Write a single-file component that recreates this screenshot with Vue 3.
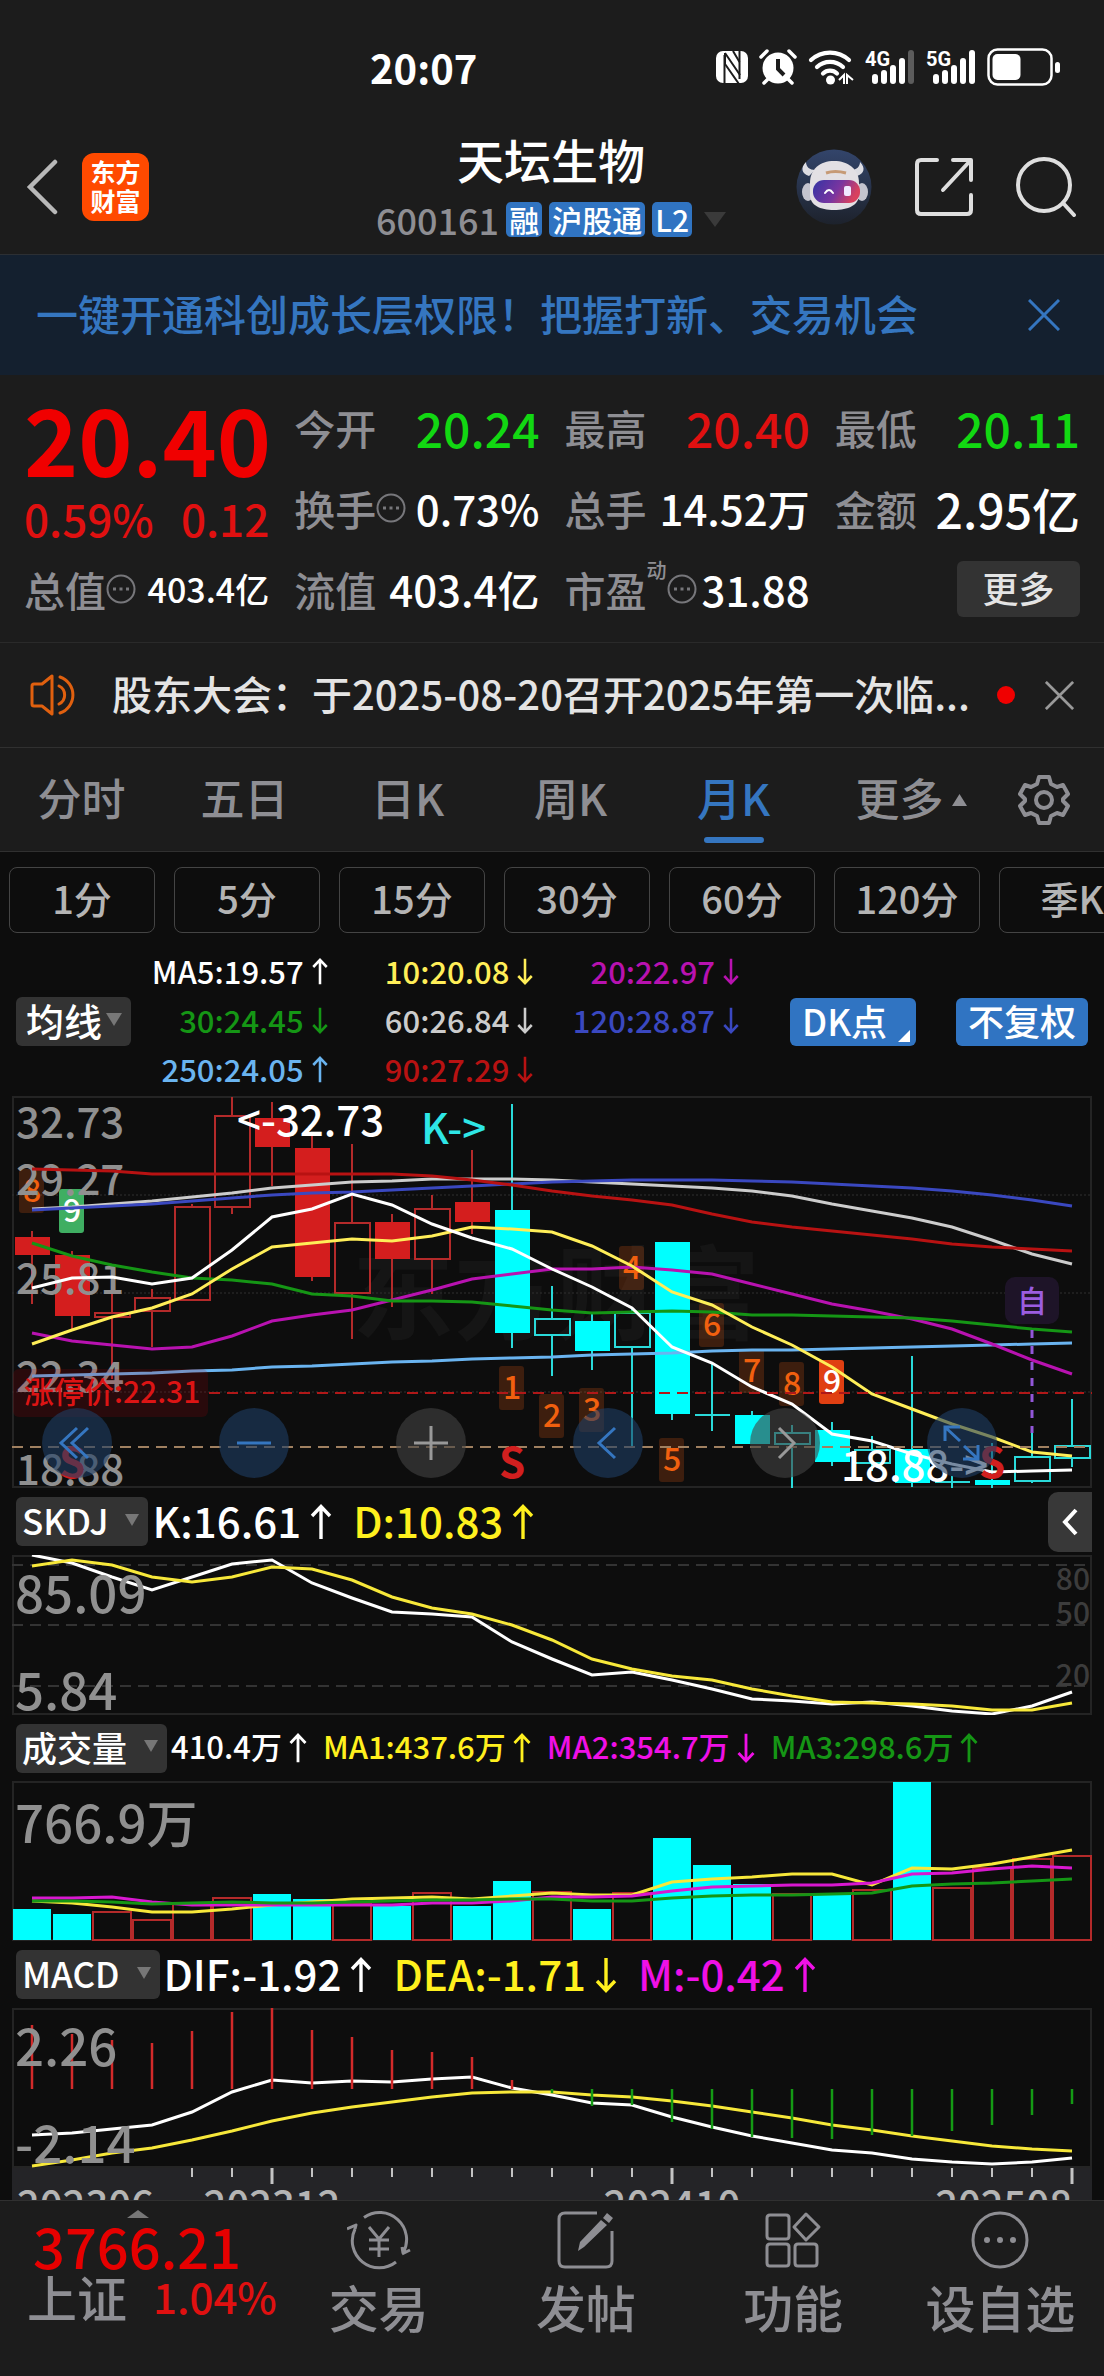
<template>
  <div class="page">
    <!-- Iconos reutilizados -->
    <svg class="symbols" aria-hidden="true">
      <symbol id="arrow" viewBox="0 0 24 36">
        <path d="M12 35V3M3 12l9-9.5 9 9.5" fill="none" stroke="currentColor" stroke-width="3.4" />
      </symbol>
      <symbol id="close" viewBox="0 0 32 32">
        <path d="M1 1l30 30M31 1L1 31" fill="none" stroke="currentColor" stroke-width="3" />
      </symbol>
      <symbol id="more" viewBox="0 0 30 30">
        <circle cx="15" cy="15" r="13.5" fill="none" stroke="currentColor" stroke-width="2" />
        <path d="M7 13.5h3v3H7zM13.500 13.500h3v3h-3zM20 13.500h3v3h-3z" fill="currentColor" />
      </symbol>
    </svg>

    <!-- Barra de estado -->
    <div class="status">
      <span class="clock">20:07</span>
      <div class="status-icons">
        <svg width="32" height="34" viewBox="0 0 32 34">
          <rect x="0" y="1" width="32" height="32" rx="7" fill="#fff" />
          <path d="M8.500 34V5M23.500 0v29" fill="none" stroke="#1c1c1c" stroke-width="2" />
          <path d="M9 3l15 22M9 14l14 20M9 3v11M23.500 12L17 1" fill="none" stroke="#1c1c1c" stroke-width="2" />
        </svg>
        <svg width="38" height="36" viewBox="0 0 38 36">
          <circle cx="19" cy="19" r="15.500" fill="#fff" />
          <path d="M2 8l6-6M36 8l-6-6M9 30l-4 4M29 30l4 4" stroke="#fff" stroke-width="3.500" stroke-linecap="round" />
          <path d="M19 10v10l6 6" fill="none" stroke="#1c1c1c" stroke-width="4" />
        </svg>
        <svg width="46" height="36" viewBox="0 0 46 36">
          <g fill="none" stroke="#fff" stroke-width="4.200" stroke-linecap="round">
            <path d="M3 11a28 28 0 0 1 38 0" />
            <path d="M9 18a19 19 0 0 1 26 0" />
            <path d="M15 24.500a10 10 0 0 1 14 0" />
          </g>
          <circle cx="22.500" cy="31" r="4.500" fill="#fff" />
          <path d="M31 31l5-5v9M39 35v-9l6 5" fill="none" stroke="#fff" stroke-width="2" />
        </svg>
        <svg v-for="net in networks" :key="net.name" width="50" height="36" viewBox="0 0 50 36">
          <text x="0" y="17" class="net-name">{{ net.name }}</text>
          <rect
            v-for="(h, i) in [10, 14, 19, 26, 34]"
            :key="h"
            :x="7 + i * 9"
            :y="35 - h"
            width="6"
            :height="h"
            rx="3"
            :fill="i < net.level ? '#fff' : '#5c5c5c'"
          />
        </svg>
        <svg width="73" height="38" viewBox="0 0 73 38">
          <rect x="1.500" y="1.500" width="63" height="35" rx="9" fill="none" stroke="#fff" stroke-width="2.500" />
          <rect x="5.500" y="6" width="28" height="26" rx="5" fill="#fff" />
          <rect x="68" y="14" width="5" height="11" rx="2.500" fill="#fff" />
        </svg>
      </div>
    </div>

    <header class="header">
      <div class="side">
        <button class="plain" aria-label="返回">
          <svg width="32" height="56" viewBox="0 0 32 56">
            <path d="M29 3L4 28l25 25" fill="none" stroke="#b8b8b8" stroke-width="4.500" stroke-linecap="round" />
          </svg>
        </button>
        <a href="#" class="brand">东方<br>财富</a>
      </div>
      <div class="title">
        <h1>天坛生物</h1>
        <div class="code">
          <span class="code-num">600161</span>
          <span class="tag">融</span>
          <span class="tag">沪股通</span>
          <span class="tag">L2</span>
          <svg width="22" height="15" viewBox="0 0 22 15"><path d="M0 0h22L11 15z" fill="#3a3a3a" /></svg>
        </div>
      </div>
      <div class="side side-right">
        <button class="plain" aria-label="助手">
          <svg width="76" height="76" viewBox="0 0 76 76">
            <defs>
              <linearGradient id="sky" x1="0" y1="0" x2="0" y2="1">
                <stop offset="0" stop-color="#33456b" />
                <stop offset="1" stop-color="#1d222c" />
              </linearGradient>
              <linearGradient id="visor" x1="0" y1="0" x2="1" y2="0.300">
                <stop offset="0" stop-color="#3434a4" />
                <stop offset="0.600" stop-color="#7a35a0" />
                <stop offset="1" stop-color="#d8415e" />
              </linearGradient>
            </defs>
            <circle cx="38" cy="38" r="37.500" fill="url(#sky)" />
            <path d="M10 13c-6 6-4 12 3 14l6-6c-5 0-9-3-9-8zM64 13c6 6 4 12-3 14l-6-6c5 0 9-3 9-8z" fill="#dcdce2" />
            <ellipse cx="12" cy="43" rx="6" ry="9" fill="#c4c4ce" />
            <ellipse cx="66" cy="43" rx="6" ry="9" fill="#c4c4ce" />
            <path d="M14 34c0-14 10-22 24-22s25 8 25 22v12c0 10-11 15-25 15s-24-5-24-15z" fill="#e3e0e4" />
            <path d="M30 24q9-3 20 0" fill="none" stroke="#c69a76" stroke-width="3" />
            <rect x="17" y="31" width="47" height="23" rx="11" fill="url(#visor)" />
            <path d="M29 44q4-6 8 0" fill="none" stroke="#fff" stroke-width="2" stroke-linecap="round" />
            <rect x="48" y="37" width="7" height="10" rx="2" fill="#f0e8ff" />
          </svg>
        </button>
        <button class="plain" aria-label="分享">
          <svg width="58" height="60" viewBox="0 0 58 60" fill="none" stroke="#dedede" stroke-width="4" stroke-linecap="round" stroke-linejoin="round">
            <path d="M22 3H6q-4 0-4 4v46q0 4 4 4h46q4 0 4-4V38" />
            <path d="M38 3h18v20M55 4L28 33" />
          </svg>
        </button>
        <button class="plain" aria-label="搜索">
          <svg width="60" height="60" viewBox="0 0 60 60" fill="none" stroke="#dedede" stroke-width="4" stroke-linecap="round">
            <circle cx="28" cy="28" r="26" />
            <path d="M47 46l11 12" />
          </svg>
        </button>
      </div>
    </header>

    <div class="banner">
      <a href="#">一键开通科创成长层权限！把握打新、交易机会</a>
      <button class="plain" aria-label="关闭"><svg width="32" height="32"><use href="#close" /></svg></button>
    </div>

    <!-- Cotización -->
    <section class="quote">
      <div class="price">
        <strong>20.40</strong>
        <div class="change"><span>0.59%</span><span>0.12</span></div>
      </div>
      <div v-for="q in quotes" :key="q.label" class="cell">
        <span class="label">{{ q.label }}<sup v-if="q.sup">{{ q.sup }}</sup></span>
        <svg v-if="q.more" class="info" width="30" height="30"><use href="#more" /></svg>
        <span class="value" :class="[q.color, q.size]">{{ q.value }}</span>
      </div>
      <div class="cell cell-end"><button class="btn-more">更多</button></div>
    </section>

    <div class="notice">
      <svg width="50" height="42" viewBox="0 0 50 42" fill="none" stroke="#e0600f" stroke-width="3" stroke-linejoin="round">
        <path d="M2 12q0-2 2-2h8L22 2v38L12 32H4q-2 0-2-2z" />
        <path d="M29 12a10 10 0 0 1 0 18M30 3a19 19 0 0 1 0 36" stroke-linecap="round" />
      </svg>
      <a href="#">股东大会：于2025-08-20召开2025年第一次临...</a>
      <i class="dot" />
      <button class="plain" aria-label="关闭"><svg width="29" height="29"><use href="#close" /></svg></button>
    </div>

    <nav class="tabs">
      <button v-for="t in tabs" :key="t" class="tab" :class="{ active: t === activeTab, wide: t === '更多' }" @click="activeTab = t">
        {{ t }}<svg v-if="t === '更多'" width="15" height="12" viewBox="0 0 15 12"><path d="M7.500 0L15 12H0z" fill="currentColor" /></svg>
      </button>
      <button class="gear" aria-label="设置">
        <svg width="52" height="52" viewBox="0 0 52 52" fill="none" stroke="currentColor" stroke-width="4" stroke-linejoin="round">
          <path d="M21 3h10l2 7 6 3 6-2 5 9-5 5v2l5 5-5 9-6-2-6 3-2 7H21l-2-7-6-3-6 2-5-9 5-5v-2l-5-5 5-9 6 2 6-3z" />
          <circle cx="26" cy="26" r="8" />
        </svg>
      </button>
    </nav>

    <div class="chips">
      <button v-for="p in periods" :key="p">{{ p }}</button>
    </div>

    <div class="averages">
      <button class="select">均线<svg width="16" height="13" viewBox="0 0 16 13"><path d="M0 0h16L8 13z" fill="#777" /></svg></button>
      <div class="ma-grid">
        <span v-for="m in averages" :key="m.text" :style="{ color: m.color }">
          {{ m.text }}<svg class="arrow-s" :class="{ down: m.down }"><use href="#arrow" /></svg>
        </span>
      </div>
      <button class="blue dk">DK点<svg width="12" height="12" viewBox="0 0 12 12"><path d="M12 0v12H0z" fill="#fff" /></svg></button>
      <button class="blue">不复权</button>
    </div>

    <!-- Velas mensuales -->
    <div class="panel">
      <svg class="chart" viewBox="0 0 1080 392">
        <text class="watermark" x="340" y="236">东方财富</text>
        <rect class="frame" x="1" y="1" width="1078" height="390" />
        <path class="dotted" d="M0 99H1080M0 197H1080M0 296H1080" />
        <g v-for="(c, i) in candles" :key="i" :class="i < 12 ? 'up' : 'dn'">
          <path class="wick" :d="`M${cx(i)} ${c[3]}V${c[1]}M${cx(i)} ${c[2]}V${c[4]}`" />
          <rect v-if="c[0]" class="solid" :x="cx(i) - 17" :y="c[1]" width="35" :height="c[2] - c[1]" />
          <path v-else-if="c[1] === c[2]" class="wick" :d="`M${cx(i) - 17} ${c[1]}h35`" />
          <rect v-else class="hollow" :x="cx(i) - 17" :y="c[1]" width="35" :height="c[2] - c[1]" />
        </g>
        <g v-for="b in badges" :key="b.i">
          <rect :x="cx(b.i) - 13" :y="b.y" width="25" height="44" rx="3" :fill="b.bg || 'rgba(200,80,20,0.26)'" />
          <text class="badge" :x="cx(b.i)" :y="b.y + 33" :fill="b.bg ? '#fff' : '#f1600f'">{{ b.n }}</text>
        </g>
        <text v-for="t in priceAxis" :key="t.v" class="axis" x="4" :y="t.y">{{ t.v }}</text>
        <polyline v-for="l in maLines" :key="l.color" class="line" :points="pts(l.data)" :stroke="l.color" />
        <path d="M0 351H1080" stroke="#a08060" stroke-width="2" stroke-dasharray="11 7" />
        <path d="M197 297H1080" stroke="#b01818" stroke-width="2" stroke-dasharray="11 7" />
        <rect x="1" y="273" width="195" height="48" rx="6" fill="rgba(170,0,10,0.18)" />
        <text x="12" y="307" class="limit">涨停价:22.31</text>
        <rect x="993" y="181" width="54" height="47" rx="10" fill="#1e1428" />
        <text x="1020" y="216" class="self">自</text>
        <path d="M1020 234V337" stroke="#9257d8" stroke-width="3" stroke-dasharray="8 8" />
        <text x="225" y="40" class="mark">&lt;-32.73</text>
        <text x="409" y="48" class="mark cyan">K-&gt;</text>
        <text x="829" y="385" class="mark">18.88-&gt;</text>
        <text v-for="i in [1, 12, 24]" :key="i" :x="cx(i)" y="382" class="sell">S</text>
      </svg>
      <div class="tools">
        <button v-for="t in tools" :key="t.name" :class="{ off: t.off }" :aria-label="t.name">
          <svg width="70" height="70" viewBox="0 0 70 70"><path :d="t.d" fill="none" stroke="currentColor" stroke-width="3" /></svg>
        </button>
      </div>
    </div>

    <template v-for="ind in indicators" :key="ind.name">
      <div class="ind-head" :class="{ compact: ind.name === '成交量' }">
        <button class="select ind">{{ ind.name }}<svg width="14" height="12" viewBox="0 0 14 12"><path d="M0 0h14L7 12z" fill="#777" /></svg></button>
        <span v-for="v in ind.values" :key="v.text" :style="{ color: v.color }">
          {{ v.text }}<svg class="arrow" :class="{ down: v.down }"><use href="#arrow" /></svg>
        </span>
        <button v-if="ind.name === 'SKDJ'" class="collapse" aria-label="展开">
          <svg width="18" height="28" viewBox="0 0 18 28"><path d="M15 2L4 14l11 12" fill="none" stroke="#fff" stroke-width="4" /></svg>
        </button>
      </div>
      <div class="panel">
        <svg class="chart" viewBox="0 0 1080 160">
          <rect class="frame" x="1" y="1" width="1078" height="158" />
          <template v-if="ind.name === 'SKDJ'">
            <path class="dashed" d="M0 10H1080M0 70H1080M0 131H1080" />
            <text v-for="g in skdjGrid" :key="g.v" class="grid-num" x="1078" :y="g.y">{{ g.v }}</text>
          </template>
          <template v-if="ind.name === '成交量'">
            <rect
              v-for="(v, i) in volumes"
              :key="i"
              :class="v[0] ? 'vol-dn' : 'vol-up'"
              :x="i * 40 + 1"
              :y="v[1] + 1"
              width="38"
              :height="158 - v[1]"
            />
          </template>
          <polyline v-for="l in ind.lines" :key="l.color" class="line" :points="pts(l.data)" :stroke="l.color" />
          <template v-if="ind.name === 'MACD'">
            <path
              v-for="(y, i) in macdBars"
              :key="i"
              :d="`M${cx(i)} 81V${y}`"
              :stroke="y < 81 ? '#d22a2a' : '#149a14'"
              stroke-width="2.500"
            />
          </template>
          <text v-for="t in ind.axis" :key="t.v" class="axis big" x="3" :y="t.y">{{ t.v }}</text>
        </svg>
      </div>
    </template>

    <div class="timeline">
      <svg class="chart" viewBox="0 0 1080 32">
        <path v-for="i in 23" :key="i" :d="`M${cx(i + 3)} 0V${(i + 3) % 10 === 6 ? 16 : 9}`" stroke="#c4c4c4" :stroke-width="(i + 3) % 10 === 6 ? 3 : 2" />
        <text class="date" x="5" y="52">202306</text>
        <text class="date" x="260" y="52" text-anchor="middle">202312</text>
        <text class="date" x="660" y="52" text-anchor="middle">202410</text>
        <text class="date" x="1060" y="52" text-anchor="end">202508</text>
      </svg>
    </div>

    <footer class="footer">
      <a href="#" class="index">
        <svg width="22" height="8" viewBox="0 0 22 8"><path d="M11 0l11 8H0z" fill="#777" /></svg>
        <strong>3766.21</strong>
        <span class="index-row"><span class="index-name">上证</span><span class="index-pct">1.04%</span></span>
      </a>
      <button v-for="a in actions" :key="a.name" class="action">
        <svg width="64" height="60" viewBox="0 0 64 60" fill="none" stroke="currentColor" stroke-width="3" stroke-linejoin="round">
          <path :d="a.d" />
          <path v-if="a.fill" :d="a.fill" fill="currentColor" stroke="none" />
        </svg>
        {{ a.name }}
      </button>
    </footer>
  </div>
</template>

<script setup>
import { ref } from 'vue'

const activeTab = ref('月K')
const tabs = ['分时', '五日', '日K', '周K', '月K', '更多']
const periods = ['1分', '5分', '15分', '30分', '60分', '120分', '季K']

const networks = [
  { name: '4G', level: 4 },
  { name: '5G', level: 5 }
]

const quotes = [
  { label: '今开', value: '20.24', color: 'green', size: 'lg' },
  { label: '最高', value: '20.40', color: 'red', size: 'lg' },
  { label: '最低', value: '20.11', color: 'green', size: 'lg' },
  { label: '换手', value: '0.73%', more: true },
  { label: '总手', value: '14.52万' },
  { label: '金额', value: '2.95亿', size: 'lg' },
  { label: '总值', value: '403.4亿', more: true, size: 'sm' },
  { label: '流值', value: '403.4亿' },
  { label: '市盈', value: '31.88', more: true, sup: '动' }
]

const averages = [
  { text: 'MA5:19.57', color: '#fff' },
  { text: '10:20.08', color: '#ffee58', down: true },
  { text: '20:22.97', color: '#b812b0', down: true },
  { text: '30:24.45', color: '#159615', down: true },
  { text: '60:26.84', color: '#ccc', down: true },
  { text: '120:28.87', color: '#3a48c0', down: true },
  { text: '250:24.05', color: '#6ab4f0' },
  { text: '90:27.29', color: '#b81212', down: true }
]

// Centro horizontal de cada mes
const cx = i => 20 + i * 40
const pts = data => data.map((y, i) => `${cx(i)},${y}`).join(' ')

// [relleno, techo, base, máximo, mínimo]
const candles = [
  [1, 141, 159, 135, 208], [1, 159, 220, 155, 233], [0, 217, 221, 190, 283],
  [0, 202, 215, 193, 251], [0, 111, 204, 108, 204], [0, 20, 111, 1, 118],
  [1, 22, 51, 6, 90], [1, 52, 181, 40, 185], [0, 127, 197, 48, 243],
  [1, 126, 163, 118, 211], [0, 113, 163, 99, 198], [1, 106, 126, 54, 138],
  [1, 114, 237, 8, 252], [0, 223, 239, 190, 280], [1, 225, 255, 218, 274],
  [0, 217, 251, 211, 351], [1, 146, 318, 146, 324], [0, 319, 319, 268, 335],
  [1, 319, 348, 315, 348], [0, 337, 348, 329, 392], [1, 334, 366, 326, 370],
  [0, 354, 367, 340, 375], [1, 353, 387, 260, 391], [0, 386, 386, 380, 392],
  [1, 384, 389, 347, 392], [0, 361, 385, 336, 387], [0, 350, 362, 303, 371]
]

const maLines = [
  { color: '#6ab4f0', data: [280, 279, 278, 277, 275, 274, 271, 270, 268, 266, 265, 263, 262, 261, 259, 258, 257, 255, 254, 254, 253, 252, 251, 250, 249, 248, 247] },
  { color: '#ccc', data: [113, 111, 108, 105, 101, 97, 92, 89, 86, 85, 83, 83, 83, 84, 86, 88, 90, 92, 95, 100, 108, 115, 122, 131, 144, 158, 168] },
  { color: '#3a48c0', data: [114, 112, 110, 108, 105, 102, 99, 97, 96, 94, 92, 90, 88, 86, 85, 84, 84, 84, 85, 86, 88, 90, 92, 95, 99, 104, 110] },
  { color: '#b81212', data: [73, 74, 75, 78, 78, 78, 78, 78, 78, 78, 80, 84, 89, 95, 100, 104, 109, 118, 126, 131, 135, 139, 143, 148, 151, 153, 155] },
  { color: '#b812b0', data: [237, 245, 249, 253, 251, 240, 225, 219, 214, 204, 194, 183, 178, 173, 173, 171, 174, 178, 188, 198, 208, 215, 223, 233, 248, 264, 278] },
  { color: '#159615', data: [147, 160, 169, 176, 182, 184, 188, 198, 200, 205, 205, 206, 210, 214, 217, 216, 215, 216, 219, 219, 220, 221, 222, 225, 229, 233, 236] },
  { color: '#ffee58', data: [248, 234, 221, 212, 198, 173, 151, 147, 143, 145, 140, 131, 133, 136, 150, 170, 196, 209, 231, 249, 271, 298, 313, 328, 341, 356, 360] },
  { color: '#fff', data: [192, 182, 181, 188, 182, 154, 121, 113, 98, 109, 128, 142, 153, 173, 191, 212, 251, 267, 291, 308, 338, 345, 358, 368, 376, 375, 374] }
]

const priceAxis = [
  { v: '32.73', y: 42 },
  { v: '29.27', y: 99 },
  { v: '25.81', y: 198 },
  { v: '22.34', y: 296 },
  { v: '18.88', y: 389 }
]

const badges = [
  { i: 0, n: 8, y: 73 },
  { i: 1, n: 9, y: 93, bg: '#3fae62' },
  { i: 12, n: 1, y: 270 },
  { i: 13, n: 2, y: 298 },
  { i: 14, n: 3, y: 292 },
  { i: 15, n: 4, y: 150 },
  { i: 16, n: 5, y: 342 },
  { i: 17, n: 6, y: 207 },
  { i: 18, n: 7, y: 253 },
  { i: 19, n: 8, y: 266 },
  { i: 20, n: 9, y: 264, bg: '#e03f12' }
]

const tools = [
  { name: '最早', d: 'M35 20L19 35l16 15M46 20L30 35l16 15' },
  { name: '缩小', d: 'M18 35h34' },
  { name: '放大', d: 'M18 35h34M35 18v34', off: true },
  { name: '左移', d: 'M42 20L26 35l16 15' },
  { name: '右移', d: 'M29 20l15 15-15 15', off: true },
  { name: '全屏', d: 'M18 33V19h15M19 20l14 13M51 37v14H36M50 50L37 38' }
]

const skdjGrid = [
  { v: 80, y: 35 },
  { v: 50, y: 69 },
  { v: 20, y: 131 }
]

const indicators = [
  {
    name: 'SKDJ',
    values: [{ text: 'K:16.61', color: '#fff' }, { text: 'D:10.83', color: '#fff01e' }],
    axis: [{ v: '85.09', y: 58 }, { v: '5.84', y: 155 }],
    lines: [
      { color: '#fff', data: [0, 8, 22, 35, 22, 9, 5, 28, 43, 57, 59, 62, 87, 104, 120, 117, 125, 134, 144, 146, 149, 147, 151, 156, 159, 151, 137] },
      { color: '#f7e83a', data: [11, 5, 10, 22, 27, 22, 12, 14, 25, 42, 53, 59, 70, 85, 104, 114, 121, 125, 134, 141, 147, 148, 149, 151, 155, 155, 148] }
    ]
  },
  {
    name: '成交量',
    values: [
      { text: '410.4万', color: '#fff' },
      { text: 'MA1:437.6万', color: '#fff01e' },
      { text: 'MA2:354.7万', color: '#ef10e6', down: true },
      { text: 'MA3:298.6万', color: '#159615' }
    ],
    axis: [{ v: '766.9万', y: 62 }],
    lines: [
      { color: '#f7e83a', data: [120, 122, 126, 131, 131, 128, 124, 121, 118, 117, 116, 118, 115, 112, 114, 114, 101, 98, 96, 93, 93, 104, 87, 88, 83, 76, 69] },
      { color: '#d818d0', data: [117, 117, 116, 121, 124, 124, 124, 124, 124, 124, 122, 122, 120, 116, 116, 115, 110, 106, 105, 104, 104, 102, 93, 92, 88, 85, 87] },
      { color: '#159615', data: [120, 120, 121, 123, 122, 121, 122, 122, 121, 120, 119, 119, 118, 118, 120, 120, 117, 115, 114, 114, 113, 112, 105, 103, 102, 100, 98] }
    ]
  },
  {
    name: 'MACD',
    values: [
      { text: 'DIF:-1.92', color: '#fff' },
      { text: 'DEA:-1.71', color: '#fff01e', down: true },
      { text: 'M:-0.42', color: '#ef10e6' }
    ],
    axis: [{ v: '2.26', y: 58 }, { v: '-2.14', y: 155 }],
    lines: [
      { color: '#fff', data: [127, 125, 121, 117, 104, 84, 72, 75, 73, 74, 71, 69, 80, 87, 95, 97, 109, 119, 128, 135, 142, 145, 151, 154, 156, 154, 150] },
      { color: '#f7e83a', data: [158, 152, 145, 140, 132, 123, 113, 105, 99, 94, 89, 85, 84, 84, 87, 89, 93, 98, 104, 110, 117, 122, 128, 133, 138, 141, 143] }
    ]
  }
]

// [bajista, techo]
const volumes = [
  [1, 127], [1, 132], [0, 130], [0, 138], [0, 122], [0, 116], [1, 112], [1, 117], [0, 122],
  [1, 124], [0, 111], [1, 124], [1, 99], [0, 110], [1, 127], [0, 111], [1, 56], [1, 83],
  [1, 102], [0, 112], [1, 113], [0, 108], [1, 0], [0, 106], [0, 86], [0, 77], [0, 74]
]

const macdBars = [17, 26, 32, 35, 23, 4, 0, 22, 29, 42, 44, 49, 72, 85, 98, 97, 114, 121, 129, 130, 131, 127, 128, 123, 117, 107, 96]

const actions = [
  {
    name: '交易',
    d: 'M17 7.500A27 27 0 0 1 56 43l-1-6M55 44l8-4M49 52A27 27 0 0 1 8 19M8 19L9 15 0 19M22 17l10 12 10-12M22 30h20M22 39h20M32 29v18'
  },
  {
    name: '发帖',
    d: 'M43 3H11q-6 0-6 6v42q0 6 6 6h41q6 0 6-6V21',
    fill: 'M24 41l2-9L47 10l6 5L30 37zM49 8l4-5 6 5-4 5z'
  },
  {
    name: '功能',
    d: 'M9 5h16q3 0 3 3v18q0 3-3 3H9q-3 0-3-3V8q0-3 3-3zM9 34h16q3 0 3 3v16q0 3-3 3H9q-3 0-3-3V37q0-3 3-3zM37 34h16q3 0 3 3v16q0 3-3 3H37q-3 0-3-3V37q0-3 3-3zM45 4l13 13-13 13-12-13z'
  },
  {
    name: '设自选',
    d: 'M32 3a27 27 0 1 1 0 54a27 27 0 1 1 0-54z',
    fill: 'M16 30a3 3 0 1 1 6 0a3 3 0 1 1-6 0zM29 30a3 3 0 1 1 6 0a3 3 0 1 1-6 0zM42 30a3 3 0 1 1 6 0a3 3 0 1 1-6 0z'
  }
]
</script>

<style>
body {
  margin: 0;
  background: #0d0d0d;
}
</style>

<style scoped>
.page {
  background: #0d0d0d;
  color: #fff;
  font-family: "Noto Sans CJK SC", "Noto Sans", sans-serif;
  font-weight: 500;
  overflow: hidden;
}

button {
  font-family: inherit;
  font-weight: inherit;
  border: 0;
  padding: 0;
  cursor: pointer;
}

a {
  text-decoration: none;
  color: inherit;
}

svg {
  display: block;
  flex: none;
}

.symbols {
  position: absolute;
  width: 0;
  height: 0;
}

.plain {
  background: none;
}

/* Barra de estado y cabecera */
.status {
  height: 114px;
  padding: 10px 44px 0 370px;
  display: flex;
  align-items: center;
  justify-content: space-between;
  background: #1c1c1c;
}

.clock {
  font-size: 40px;
  line-height: 42px;
  font-weight: 700;
}

.status-icons {
  display: flex;
  align-items: center;
  gap: 11px;
}

.net-name {
  font: 700 20px Roboto, sans-serif;
  fill: #fff;
}

.header {
  display: grid;
  grid-template-columns: 1fr auto 1fr;
  align-items: center;
  height: 120px;
  padding: 0 28px 10px 26px;
  background: #1c1c1c;
  border-bottom: 1px solid #2c2f33;
}

.side {
  display: flex;
  align-items: center;
  gap: 24px;
  margin-top: 6px;
}

.side-right {
  justify-content: flex-end;
  gap: 43px;
}

.brand {
  width: 67px;
  height: 68px;
  border-radius: 12px;
  background: #ff4a00;
  font-size: 25px;
  line-height: 29px;
  font-weight: 700;
  text-align: center;
  padding-top: 4px;
  box-sizing: border-box;
}

h1 {
  margin: 0;
  font-size: 47px;
  line-height: 70px;
  font-weight: 500;
  text-align: center;
}

.code {
  display: flex;
  align-items: center;
  gap: 7px;
  height: 50px;
}

.code-num {
  font-size: 36px;
  line-height: 50px;
  color: #8e8e93;
}

.tag {
  font-size: 30px;
  line-height: 35px;
  padding: 0 3px;
  border-radius: 5px;
  background: #3074c2;
}

.code svg {
  margin-left: 5px;
}

.banner {
  height: 120px;
  padding: 0 44px 0 36px;
  display: flex;
  align-items: center;
  justify-content: space-between;
  background: #14202f;
  color: #3576c0;
  font-size: 42px;
  line-height: 60px;
}

.banner .plain {
  color: #3576c0;
}

.banner a {
  margin-bottom: 4px;
}

/* Cotización */
.quote {
  display: grid;
  grid-template-columns: repeat(4, minmax(0, 1fr));
  grid-auto-rows: 81px;
  column-gap: 25px;
  padding: 13px 24px 11px;
  background: #1c1c1c;
}

.price {
  grid-row: span 2;
  color: #f00000;
}

.price strong {
  display: block;
  font-size: 92px;
  line-height: 98px;
  font-weight: 700;
}

.change {
  display: flex;
  justify-content: space-between;
  font-size: 44px;
  line-height: 64px;
  color: #e01010;
}

.cell {
  display: flex;
  align-items: center;
  line-height: 60px;
  padding-bottom: 4px;
  white-space: nowrap;
}

.cell-end {
  justify-content: flex-end;
}

.label {
  font-size: 41px;
  color: #8e8e93;
}

sup {
  font-size: 20px;
  line-height: 20px;
  vertical-align: 29px;
}

.info {
  color: #77777b;
}

.value {
  margin-left: auto;
  font-size: 42px;
}

.value.lg {
  font-size: 48px;
}

.value.sm {
  font-size: 34px;
}

.green {
  color: #12d812;
}

.red {
  color: #e01010;
}

.btn-more {
  width: 123px;
  height: 56px;
  border-radius: 6px;
  background: #333;
  color: #e4e4e4;
  font-size: 36px;
  line-height: 52px;
  padding-bottom: 4px;
}

.notice {
  height: 104px;
  padding: 0 30px;
  display: flex;
  align-items: center;
  border-top: 1px solid #2a2a2a;
  background: #1c1c1c;
}

.notice a {
  flex: 1;
  margin: 0 0 4px 32px;
  font-size: 40px;
  line-height: 60px;
  color: #e4e4e4;
  white-space: nowrap;
}

.dot {
  width: 18px;
  height: 18px;
  border-radius: 50%;
  background: #f00000;
  margin-right: 30px;
}

.notice .plain {
  color: #999;
}

/* Pestañas */
.tabs {
  display: flex;
  height: 103px;
  padding-right: 24px;
  background: #1c1c1c;
  border-top: 1px solid #303030;
  border-bottom: 1px solid #303030;
}

.tab {
  position: relative;
  flex: 163;
  display: flex;
  align-items: center;
  justify-content: center;
  gap: 8px;
  padding-bottom: 6px;
  background: none;
  color: #8e8e93;
  font-size: 44px;
}

.tab.wide {
  flex: 192;
}

.tab svg {
  margin-top: 6px;
}

.tab.active {
  color: #3576c0;
}

.tab.active::after {
  content: '';
  position: absolute;
  left: 50%;
  bottom: 8px;
  width: 60px;
  height: 6px;
  margin-left: -30px;
  border-radius: 3px;
  background: #3576c0;
}

.gear {
  flex: 73;
  display: flex;
  align-items: center;
  justify-content: center;
  background: none;
  color: #8e8e93;
}

.chips {
  display: flex;
  gap: 19px;
  padding: 15px 0 15px 9px;
  overflow: hidden;
}

.chips button {
  flex: none;
  width: 146px;
  height: 66px;
  border: 1px solid #444;
  border-radius: 8px;
  background: none;
  color: #b4b4b4;
  font-size: 38px;
  line-height: 56px;
  padding-bottom: 4px;
}

/* Medias móviles */
.averages {
  display: flex;
  align-items: center;
  padding: 0 16px 1px;
}

.select {
  display: flex;
  align-items: center;
  justify-content: space-between;
  height: 49px;
  width: 115px;
  padding: 0 9px 4px 10px;
  box-sizing: border-box;
  border-radius: 6px;
  background: #333;
  color: #fff;
  font-size: 38px;
  line-height: 45px;
}

.ma-grid {
  flex: 1;
  display: grid;
  grid-template-columns: 198fr 206fr 206fr;
  grid-auto-rows: 49px;
}

.ma-grid span {
  display: flex;
  align-items: center;
  justify-content: flex-end;
  gap: 7px;
  padding-bottom: 3px;
  font-size: 31px;
  line-height: 44px;
}

.arrow-s {
  width: 18px;
  height: 27px;
}

.down {
  transform: rotate(180deg);
}

.blue {
  width: 132px;
  height: 48px;
  margin-left: 40px;
  border-radius: 6px;
  background: #3074c2;
  color: #fff;
  font-size: 36px;
  line-height: 42px;
  padding-bottom: 4px;
}

.dk {
  display: flex;
  align-items: center;
  justify-content: space-between;
  width: 126px;
  margin-left: 50px;
  padding: 0 6px 4px 12px;
}

.dk svg {
  align-self: flex-end;
}

/* Gráficos */
.panel {
  position: relative;
  margin: 0 12px;
}

.chart {
  width: 100%;
}

.frame {
  fill: none;
  stroke: #242424;
  stroke-width: 2;
}

.watermark {
  font-size: 102px;
  font-weight: 700;
  fill: #151515;
}

.dotted {
  stroke: #303030;
  stroke-width: 1;
  stroke-dasharray: 2 2;
}

.dashed {
  stroke: #333;
  stroke-width: 2;
  stroke-dasharray: 11 7;
}

.up .wick { stroke: #b42a2a; }
.up .solid { fill: #d41e1e; }
.up .hollow { stroke: #b42a2a; }
.dn .wick { stroke: #2adada; }
.dn .solid { fill: #0ff; }
.dn .hollow { stroke: #2adada; }

.wick {
  stroke-width: 2;
}

.hollow {
  fill: none;
  stroke-width: 2;
}

.line {
  fill: none;
  stroke-width: 3;
}

.axis {
  font-size: 42px;
  fill: #909090;
}

.axis.big {
  font-size: 51px;
}

.badge {
  font-size: 32px;
  text-anchor: middle;
}

.limit {
  font-size: 30px;
  fill: #dc1414;
}

.self {
  font-size: 30px;
  fill: #9b5de0;
  text-anchor: middle;
}

.mark {
  font-size: 42px;
  fill: #fff;
}

.mark.cyan {
  fill: #2ee6e6;
}

.sell {
  font-size: 42px;
  font-weight: 700;
  fill: #d21f1f;
  text-anchor: middle;
}

.tools {
  position: absolute;
  left: 30px;
  right: 95px;
  bottom: 10px;
  display: flex;
  justify-content: space-between;
}

.tools button {
  width: 70px;
  height: 70px;
  border-radius: 50%;
  background: rgba(30, 62, 100, 0.6);
  color: #3576c0;
}

.tools .off {
  background: rgba(66, 66, 66, 0.6);
  color: #999;
}

.ind-head {
  display: flex;
  align-items: center;
  height: 67px;
  padding: 0 12px 0 16px;
  font-size: 42px;
  line-height: 60px;
}

.ind-head span {
  display: flex;
  align-items: center;
  gap: 8px;
  margin-right: 20px;
  padding-bottom: 4px;
}

.select.ind {
  width: auto;
  gap: 17px;
  padding: 0 9px 4px 6px;
  margin-right: 4px;
  font-size: 35px;
}

.arrow {
  width: 24px;
  height: 36px;
  margin-top: 4px;
}

.ind-head.compact {
  height: 66px;
  font-size: 31px;
}

.compact span {
  gap: 6px;
  margin-right: 15px;
}

.compact .arrow {
  width: 20px;
}

.collapse {
  display: flex;
  align-items: center;
  justify-content: center;
  width: 44px;
  height: 60px;
  margin-left: auto;
  border-radius: 10px 0 0 10px;
  background: #383838;
}

.grid-num {
  font-size: 30px;
  fill: #3c3c3c;
  text-anchor: end;
}

.vol-dn {
  fill: #0ff;
}

.vol-up {
  fill: none;
  stroke: #b42a2a;
  stroke-width: 2;
}

.timeline {
  margin: 0 12px;
  background: #242427;
}

.date {
  font-size: 40px;
  fill: #b4b4b4;
}

/* Barra inferior */
.footer {
  display: grid;
  grid-template-columns: 275px repeat(4, 1fr);
  padding: 9px 0 34px;
  background: #1c1c1c;
  border-top: 1px solid #303030;
}

.index {
  display: flex;
  flex-direction: column;
  padding-left: 27px;
}

.index svg {
  margin-left: 100px;
}

.index strong {
  margin-left: 6px;
  font-size: 56px;
  line-height: 54px;
  font-weight: 500;
  color: #e60000;
}

.index-row {
  display: flex;
  align-items: center;
  gap: 26px;
  line-height: 48px;
  white-space: nowrap;
}

.index-name {
  font-size: 50px;
  color: #8e8e93;
}

.index-pct {
  font-size: 42px;
  color: #e01010;
}

.action {
  display: flex;
  flex-direction: column;
  align-items: center;
  background: none;
  color: #8e8e93;
  font-size: 50px;
  line-height: 72px;
}
</style>
